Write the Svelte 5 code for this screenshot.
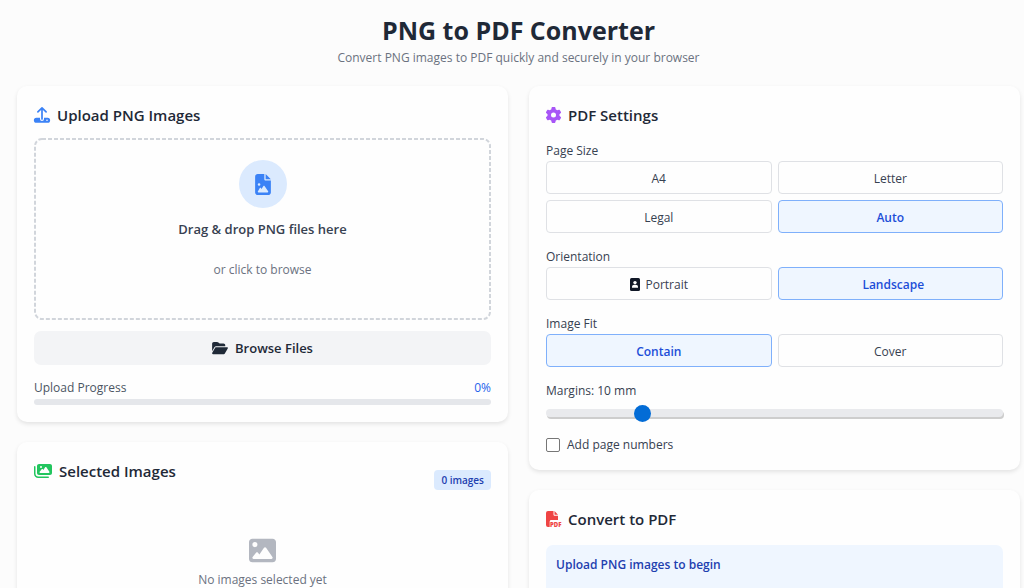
<script>
  const pageSizes = ['A4', 'Letter', 'Legal', 'Auto'];
  const orientations = ['Portrait', 'Landscape'];
  const fits = ['Contain', 'Cover'];

  let pageSize = $state('Auto');
  let orientation = $state('Landscape');
  let fit = $state('Contain');
  let margin = $state(10);
  let pageNumbers = $state(false);
  let progress = $state(0);
  let images = $state([]);
  let fileInput;

  function browse() {
    fileInput.click();
  }

  function addFiles(files) {
    images = [...images, ...Array.from(files).filter((file) => file.type === 'image/png')];
    progress = images.length ? 100 : 0;
  }

  function handleDrop(event) {
    event.preventDefault();
    addFiles(event.dataTransfer.files);
  }
</script>

<div class="page">
  <header class="intro">
    <h1>PNG to PDF Converter</h1>
    <p>Convert PNG images to PDF quickly and securely in your browser</p>
  </header>

  <main class="columns">
    <div class="column">
      <section class="card">
        <h2>
          <svg class="icon blue" width="16" height="16" viewBox="0 0 16 16" aria-hidden="true">
            <path d="M3.9 4.8 8 .9l4.1 3.9M8 1.2V12" fill="none" stroke="currentColor" stroke-width="1.7" stroke-linecap="round" stroke-linejoin="round" />
            <path d="M2.4 10.7H6V12a2 2 0 0 0 4 0v-1.3h3.6a2.4 2.4 0 0 1 0 5.1H2.4a2.4 2.4 0 0 1 0-5.1zM13 12.5a.8.8 0 1 0 0 1.6.8.8 0 0 0 0-1.6z" fill="currentColor" fill-rule="evenodd" />
          </svg>
          Upload PNG Images
        </h2>

        <button class="dropzone" onclick={browse} ondragover={(e) => e.preventDefault()} ondrop={handleDrop}>
          <svg class="outline" aria-hidden="true">
            <rect x="1" y="1" rx="7" />
          </svg>
          <span class="circle">
            <svg width="16" height="21" viewBox="0 0 384 512" fill="currentColor" aria-hidden="true">
              <path d="M64 0C28.7 0 0 28.7 0 64V448c0 35.3 28.7 64 64 64H320c35.3 0 64-28.7 64-64V160H256c-17.7 0-32-14.3-32-32V0H64zM256 0V128H384L256 0zM64 256a32 32 0 1 1 64 0 32 32 0 1 1-64 0zm152 32c5.3 0 10.2 2.6 13.2 6.9l88 128c3.4 4.9 3.7 11.3 1 16.5s-8.2 8.6-14.2 8.6H216 176 128 80c-5.8 0-11.1-3.1-13.9-8.1s-2.8-11.2 .2-16.1l48-80c2.9-4.8 8.1-7.8 13.7-7.8s10.8 2.9 13.7 7.8l12.8 21.4 48.3-70.2c3-4.3 7.9-6.9 13.2-6.9z" />
            </svg>
          </span>
          <span class="drop-title">Drag &amp; drop PNG files here</span>
          <span class="drop-hint">or click to browse</span>
        </button>
        <input bind:this={fileInput} type="file" accept="image/png" multiple hidden aria-label="PNG files" onchange={(e) => addFiles(e.target.files)} />

        <button class="browse" onclick={browse}>
          <svg width="16" height="14" viewBox="0 0 576 512" fill="currentColor" aria-hidden="true">
            <path d="M88.7 223.8L0 375.8V96C0 60.7 28.7 32 64 32H181.5c17 0 33.3 6.7 45.3 18.7l26.5 26.5c12 12 28.3 18.7 45.3 18.7H416c35.3 0 64 28.7 64 64v32H144c-22.8 0-43.8 12.1-55.3 31.8zm27.6 16.1C122.1 230 132.6 224 144 224H544c11.5 0 22 6.1 27.7 16.1s5.7 22.2-.1 32.1l-112 192C453.9 474 443.4 480 432 480H32c-11.5 0-22-6.1-27.7-16.1s-5.7-22.2 .1-32.1l112-192z" />
          </svg>
          Browse Files
        </button>

        <div class="progress-row">
          <span>Upload Progress</span>
          <span class="percent">{progress}%</span>
        </div>
        <div class="bar">
          <div class="bar-fill" style="width: {progress}%"></div>
        </div>
      </section>

      <section class="card">
        <div class="selected-head">
          <h2>
            <svg class="icon green" width="18" height="16" viewBox="0 0 576 512" fill="currentColor" aria-hidden="true">
              <path d="M160 32c-35.3 0-64 28.7-64 64V320c0 35.3 28.7 64 64 64H512c35.3 0 64-28.7 64-64V96c0-35.3-28.7-64-64-64H160zM396 138.7l96 144c4.9 7.4 5.4 16.8 1.2 24.6S480.9 320 472 320H328 280 200c-9.2 0-17.6-5.3-21.6-13.6s-2.9-18.2 2.9-25.4l64-80c4.6-5.7 11.4-9 18.7-9s14.2 3.3 18.7 9l17.3 21.6 56-84C360.5 132 368 128 376 128s15.5 4 20 10.7zM192 128a32 32 0 1 1 64 0 32 32 0 1 1-64 0zM48 120c0-13.3-10.7-24-24-24S0 106.7 0 120V344c0 75.1 60.9 136 136 136H456c13.3 0 24-10.7 24-24s-10.7-24-24-24H136c-48.6 0-88-39.4-88-88V120z" />
            </svg>
            Selected Images
          </h2>
          <span class="badge">{images.length} images</span>
        </div>
        <div class="empty">
          <svg width="27" height="27" viewBox="0 0 512 512" fill="currentColor" aria-hidden="true">
            <path d="M0 96C0 60.7 28.7 32 64 32H448c35.3 0 64 28.7 64 64V416c0 35.3-28.7 64-64 64H64c-35.3 0-64-28.7-64-64V96zM323.8 202.5c-4.5-6.6-11.9-10.5-19.8-10.5s-15.4 3.9-19.8 10.5l-87 127.6L170.7 297c-4.6-5.7-11.5-9-18.7-9s-14.2 3.3-18.7 9l-64 80c-5.8 7.2-6.9 17.1-2.9 25.4s12.4 13.6 21.6 13.6h96 32H424c8.9 0 17.1-4.9 21.2-12.8s3.6-17.4-1.4-24.7l-120-176zM112 192a48 48 0 1 0 0-96 48 48 0 1 0 0 96z" />
          </svg>
          <p>No images selected yet</p>
        </div>
      </section>
    </div>

    <div class="column">
      <section class="card">
        <h2>
          <svg class="icon purple" width="15" height="16" viewBox="16 0 480 512" fill="currentColor" aria-hidden="true">
            <path d="M495.9 166.6c3.2 8.7 .5 18.4-6.4 24.6l-43.3 39.4c1.1 8.3 1.7 16.8 1.7 25.4s-.6 17.1-1.7 25.4l43.3 39.4c6.9 6.2 9.6 15.9 6.4 24.6c-4.4 11.9-9.7 23.3-15.8 34.3l-4.7 8.1c-6.6 11-14 21.4-22.1 31.2c-5.9 7.2-15.7 9.6-24.5 6.8l-55.7-17.7c-13.4 10.3-28.2 18.9-44 25.4l-12.5 57.1c-2 9.1-9 16.3-18.2 17.8c-13.8 2.3-28 3.5-42.5 3.5s-28.7-1.2-42.5-3.5c-9.2-1.5-16.2-8.7-18.2-17.8l-12.5-57.1c-15.8-6.5-30.6-15.1-44-25.4L83.1 425.9c-8.8 2.8-18.6 .3-24.5-6.8c-8.1-9.8-15.5-20.2-22.1-31.2l-4.7-8.1c-6.1-11-11.4-22.4-15.8-34.3c-3.2-8.7-.5-18.4 6.4-24.6l43.3-39.4C64.6 273.1 64 264.6 64 256s.6-17.1 1.7-25.4L22.4 191.2c-6.9-6.2-9.6-15.9-6.4-24.6c4.4-11.9 9.7-23.3 15.8-34.3l4.7-8.1c6.6-11 14-21.4 22.1-31.2c5.9-7.2 15.7-9.6 24.5-6.8l55.7 17.7c13.4-10.3 28.2-18.9 44-25.4l12.5-57.1c2-9.1 9-16.3 18.2-17.8C227.3 1.2 241.5 0 256 0s28.7 1.2 42.5 3.5c9.2 1.5 16.2 8.7 18.2 17.8l12.5 57.1c15.8 6.5 30.6 15.1 44 25.4l55.7-17.7c8.8-2.8 18.6-.3 24.5 6.8c8.1 9.8 15.5 20.2 22.1 31.2l4.7 8.1c6.1 11 11.4 22.4 15.8 34.3zM256 336a80 80 0 1 0 0-160 80 80 0 1 0 0 160z" />
          </svg>
          PDF Settings
        </h2>

        <div class="settings">
          <fieldset>
            <legend>Page Size</legend>
            <div class="options">
              {#each pageSizes as option}
                <button class="option" class:active={pageSize === option} aria-pressed={pageSize === option} onclick={() => (pageSize = option)}>{option}</button>
              {/each}
            </div>
          </fieldset>

          <fieldset>
            <legend>Orientation</legend>
            <div class="options">
              {#each orientations as option}
                <button class="option" class:active={orientation === option} aria-pressed={orientation === option} onclick={() => (orientation = option)}>
                  {#if option === 'Portrait'}
                    <svg width="10" height="13" viewBox="0 0 10 13" aria-hidden="true">
                      <rect width="10" height="13" rx="1.5" fill="#111827" />
                      <circle cx="5" cy="4.6" r="1.7" fill="#fff" />
                      <path d="M2 9.8V9c0-1.3 1-2.2 2.2-2.2h1.6C7 6.8 8 7.7 8 9v.8z" fill="#fff" />
                    </svg>
                  {:else}
                    <span></span>
                  {/if}
                  {option}
                </button>
              {/each}
            </div>
          </fieldset>

          <fieldset>
            <legend>Image Fit</legend>
            <div class="options">
              {#each fits as option}
                <button class="option" class:active={fit === option} aria-pressed={fit === option} onclick={() => (fit = option)}>{option}</button>
              {/each}
            </div>
          </fieldset>

          <div class="margins">
            <label for="margin">Margins: {margin} mm</label>
            <input id="margin" type="range" min="0" max="50" bind:value={margin} />
          </div>

          <label class="check">
            <input type="checkbox" bind:checked={pageNumbers} />
            Add page numbers
          </label>
        </div>
      </section>

      <section class="card">
        <h2>
          <svg class="icon red" width="15" height="16" viewBox="0 0 15 16" aria-hidden="true">
            <path d="M2 0h5.5v3.5c0 .8.5 1.3 1.3 1.3H12V9H5.2C4.3 9 3.700 9.600 3.700 10.500V16H2a2 2 0 0 1-2-2V2a2 2 0 0 1 2-2zM8.500 0 12 3.800H8.500z" fill="currentColor" />
            <text x="4" y="15.5" font-size="6" font-weight="800" fill="currentColor">PDF</text>
          </svg>
          Convert to PDF
        </h2>
        <div class="notice">Upload PNG images to begin</div>
      </section>
    </div>
  </main>
</div>

<style>
  :global(body) {
    background: #fcfcfc;
  }

  .page {
    box-sizing: border-box;
    height: 100vh;
    overflow-y: auto;
    scrollbar-width: none;
    padding: 13px 4px 0 17px;
    font-family: 'Open Sans', 'Noto Sans', sans-serif;
    font-size: 12px;
    line-height: 20px;
    color: #374151;
  }

  h1, h2, p {
    margin: 0;
  }

  button {
    font-family: inherit;
    cursor: pointer;
  }

  .intro {
    text-align: center;
    margin-bottom: 18px;
  }

  h1 {
    margin-bottom: 1px;
    font-size: 25px;
    line-height: 34px;
    font-weight: 700;
    color: #1f2937;
  }

  .intro p {
    color: #6b7280;
  }

  .columns {
    display: grid;
    grid-template-columns: 1fr 1fr;
    gap: 21px;
  }

  .column {
    display: flex;
    flex-direction: column;
    gap: 20px;
  }

  .card {
    padding: 17px;
    border-radius: 10px;
    background: #fefefe;
    box-shadow: 0 2px 4px rgba(0, 0, 0, 0.1);
  }

  h2 {
    display: flex;
    align-items: center;
    gap: 7px;
    margin-bottom: 11px;
    font-size: 15px;
    line-height: 24px;
    font-weight: 600;
    color: #1f2937;
  }

  .icon {
    flex: none;
    overflow: visible;
  }

  .blue {
    color: #3b82f6;
  }

  .green {
    color: #22c55e;
  }

  .purple {
    color: #a855f7;
  }

  .red {
    color: #ef4444;
  }

  .dropzone {
    position: relative;
    display: flex;
    flex-direction: column;
    align-items: center;
    width: 100%;
    padding: 22px 22px 40px;
    border: 0;
    background: none;
    line-height: 20px;
  }

  /* tighter dashes than border-style: dashed gives */
  .outline {
    position: absolute;
    inset: 0;
    width: 100%;
    height: 100%;
  }

  .outline rect {
    width: calc(100% - 2px);
    height: calc(100% - 2px);
    fill: none;
    stroke: #d1d5db;
    stroke-width: 2px;
    stroke-dasharray: 4 2;
  }

  .circle {
    display: flex;
    align-items: center;
    justify-content: center;
    width: 48px;
    height: 48px;
    margin-bottom: 11px;
    border-radius: 50%;
    background: #dbeafe;
    color: #3b82f6;
  }

  .drop-title {
    margin-bottom: 21px;
    font-size: 13px;
    font-weight: 600;
    color: #374151;
  }

  .drop-hint {
    font-size: 12px;
    color: #6b7280;
  }

  .browse {
    display: flex;
    align-items: center;
    justify-content: center;
    gap: 7px;
    width: 100%;
    margin: 11px 0 13px;
    padding: 7px;
    border: 0;
    border-radius: 7px;
    background: #f3f4f6;
    font-size: 13px;
    line-height: 20px;
    font-weight: 600;
    color: #1f2937;
  }

  .progress-row {
    display: flex;
    justify-content: space-between;
    margin-bottom: 1px;
    color: #4b5563;
  }

  .percent {
    font-weight: 500;
    color: #2563eb;
  }

  .bar {
    height: 6px;
    border-radius: 3px;
    background: #e5e7eb;
    overflow: hidden;
  }

  .bar-fill {
    height: 100%;
    background: #3b82f6;
  }

  .selected-head {
    display: flex;
    align-items: center;
    justify-content: space-between;
  }

  .selected-head h2 {
    margin-bottom: 18px;
  }

  .badge {
    padding: 0 7px;
    border-radius: 4px;
    background: #dbeafe;
    font-size: 10px;
    font-weight: 600;
    color: #1e40af;
  }

  .empty {
    display: flex;
    flex-direction: column;
    align-items: center;
    gap: 6px;
    padding: 36px 0;
    color: #6b7280;
  }

  .empty svg {
    color: #b3b7c0;
  }

  .settings {
    display: flex;
    flex-direction: column;
    gap: 13px;
    padding-top: 2px;
  }

  fieldset {
    min-width: 0;
    margin: 0;
    padding: 0;
    border: 0;
  }

  legend, .margins label {
    display: block;
    padding: 1px 0 0;
    font-weight: 500;
    color: #374151;
  }

  .options {
    display: grid;
    grid-template-columns: 1fr 1fr;
    gap: 6px;
  }

  .option {
    display: flex;
    align-items: center;
    justify-content: center;
    gap: 6px;
    height: 33px;
    padding: 2px 8px 0;
    border: 1px solid #dfe1e5;
    border-radius: 4px;
    background: #fefefe;
    font-size: 12px;
    color: #374151;
  }

  .option.active {
    border-color: #7fb0fb;
    background: #eff6ff;
    font-weight: 600;
    color: #1d4ed8;
  }

  .margins input {
    display: block;
    appearance: none;
    width: 100%;
    height: 8px;
    margin: 8px 0 7px;
    border-radius: 4px;
    background: #e9eaed;
    box-shadow: 1px 2px 0 #cdcdcd;
  }

  .margins input::-webkit-slider-thumb {
    appearance: none;
    width: 17px;
    height: 17px;
    border-radius: 50%;
    background: #036cd6;
  }

  .check {
    display: flex;
    align-items: center;
    gap: 7px;
    line-height: 16px;
    font-weight: 500;
  }

  .check input {
    appearance: none;
    box-sizing: border-box;
    width: 14px;
    height: 14px;
    margin: 0;
    border: 1px solid #767676;
    border-radius: 2px;
    background: #fff;
  }

  .check input:checked {
    background: #036cd6;
  }

  .notice {
    min-height: 60px;
    margin-top: 14px;
    padding: 10px;
    border-radius: 7px;
    background: #eff6ff;
    font-weight: 600;
    color: #1e40af;
  }
</style>
